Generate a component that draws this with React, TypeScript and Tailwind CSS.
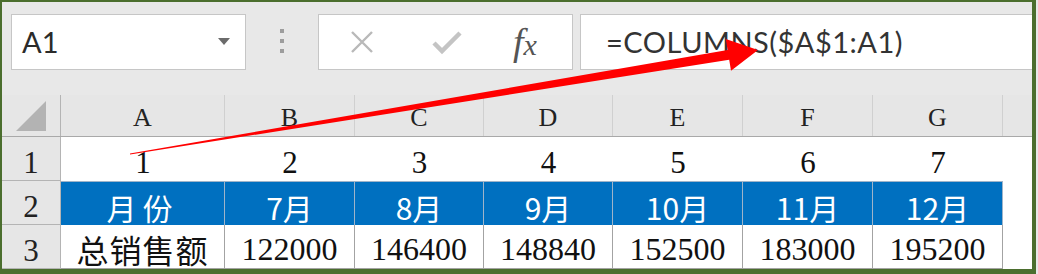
const COLS = [
  { key: "A", w: "w-[164px]", n: "1", month: "月份", total: "总销售额" },
  { key: "B", w: "w-[130px]", n: "2", month: "7月", total: "122000" },
  { key: "C", w: "w-[129px]", n: "3", month: "8月", total: "146400" },
  { key: "D", w: "w-[129px]", n: "4", month: "9月", total: "148840" },
  { key: "E", w: "w-[130px]", n: "5", month: "10月", total: "152500" },
  { key: "F", w: "w-[130px]", n: "6", month: "11月", total: "183000" },
  { key: "G", w: "w-[130px]", n: "7", month: "12月", total: "195200" },
];

const serif = "font-['Liberation_Serif','Noto_Sans_CJK_SC',serif]";
const sans = "font-['Lato','Open_Sans',sans-serif]";

function RowHead({ label }: { label: string }) {
  return (
    <div
      className={`flex w-[59px] shrink-0 items-end justify-center border-r border-b border-[#b4b4b4] bg-[#e6e6e6] pb-[2px] text-[31px] leading-none text-[#222] ${serif}`}
    >
      {label}
    </div>
  );
}

function Toolbar() {
  return (
    <div className="flex h-[93px] shrink-0 items-start pt-[12px] pl-[9px]">
      <div className="flex h-[56px] w-[235px] items-center justify-between border border-[#c6c6c6] bg-white pr-[15px] pl-[10px]">
        <span className={`text-[29px] text-[#2b2b2b] ${sans}`}>A1</span>
        <svg width="12" height="8" viewBox="0 0 12 8">
          <path d="M0 0 L12 0 L6 7 Z" fill="#6b6b6b" />
        </svg>
      </div>
      <div className="flex w-[72px] flex-col items-center gap-[6px] pt-[15px]">
        <span className="size-[4px] bg-[#9d9d9d]" />
        <span className="size-[4px] bg-[#9d9d9d]" />
        <span className="size-[4px] bg-[#9d9d9d]" />
      </div>
      <div className="flex h-[56px] w-[255px] items-center border border-[#c6c6c6] bg-white">
        <svg className="ml-[30px]" width="26" height="26" viewBox="0 0 26 26">
          <path d="M3 3 L23 23 M23 3 L3 23" stroke="#b9b9b9" strokeWidth="2.4" />
        </svg>
        <svg className="ml-[56px]" width="32" height="26" viewBox="0 0 32 26">
          <path
            d="M3 14 L11 22 L29 4"
            fill="none"
            stroke="#c4c4c4"
            strokeWidth="4.5"
          />
        </svg>
        <span
          className={`ml-[50px] text-[38px] italic leading-none text-[#555] ${serif}`}
        >
          f<span className="text-[30px]">x</span>
        </span>
      </div>
      <div className="ml-[7px] flex h-[56px] flex-1 items-center border-y border-l border-[#c6c6c6] bg-white pl-[25px]">
        <span className={`text-[29px] tracking-[0.5px] text-[#333] ${sans}`}>
          =COLUMNS($A$1:A1)
        </span>
      </div>
    </div>
  );
}

export default function App() {
  return (
    <div className="relative h-[274px] w-[1038px] overflow-hidden bg-[#e8e8e8]">
      <div className="flex h-full w-[1036px] flex-col border-t-2 border-r-4 border-b-[5px] border-l-2 border-[#4b6e2e]">
        <Toolbar />

        {/* column headers */}
        <div className="flex h-[42px] shrink-0 border-b border-[#a9a9a9] bg-[#e6e6e6]">
          <div className="flex w-[59px] shrink-0 items-center justify-center border-r border-[#b4b4b4]">
            <svg width="32" height="32" viewBox="0 0 32 32">
              <path d="M31 1 L31 31 L1 31 Z" fill="#b3b3b3" />
            </svg>
          </div>
          {COLS.map((c) => (
            <div
              key={c.key}
              className={`${c.w} flex shrink-0 items-end justify-center border-r border-[#d0d0d0] pb-[5px] text-[26px] leading-none text-[#222] ${serif}`}
            >
              {c.key}
            </div>
          ))}
          <div className="flex-1" />
        </div>

        {/* row 1 */}
        <div className="flex h-[44px] shrink-0 bg-white">
          <RowHead label="1" />
          {COLS.map((c) => (
            <div
              key={c.key}
              className={`${c.w} flex shrink-0 items-end justify-center pb-[3px] text-[31px] leading-none text-[#111] ${serif}`}
            >
              {c.n}
            </div>
          ))}
          <div className="flex-1" />
        </div>

        {/* row 2 */}
        <div className="flex h-[44px] shrink-0 bg-white">
          <RowHead label="2" />
          {COLS.map((c) => (
            <div
              key={c.key}
              className={`${c.w} flex shrink-0 items-end justify-center border-t border-r border-[#9fb4c9] bg-[#0070c0] pb-[3px] text-[30px] leading-none text-white font-['Noto_Sans_CJK_SC',sans-serif] ${c.key === "A" ? "tracking-[6px]" : ""}`}
            >
              {c.month}
            </div>
          ))}
          <div className="flex-1" />
        </div>

        {/* row 3 */}
        <div className="flex h-[44px] shrink-0 bg-white">
          <RowHead label="3" />
          {COLS.map((c) => (
            <div
              key={c.key}
              className={`${c.w} flex shrink-0 items-end justify-center border-r border-b border-[#a3a3a3] pb-[3px] text-[32px] leading-none text-[#111] ${c.key === "A" ? "font-['Noto_Sans_CJK_SC',sans-serif] tracking-[1px]" : serif}`}
            >
              {c.total}
            </div>
          ))}
          <div className="flex-1" />
        </div>
      </div>

      <svg
        className="pointer-events-none absolute top-0 left-0"
        width="1038"
        height="274"
        viewBox="0 0 1038 274"
      >
        <polygon
          points="130,153.5 727.6,50 725.8,39.1 758,50 731,70.7 729.2,59.8 130,154.5"
          fill="#ff0000"
        />
      </svg>
    </div>
  );
}
